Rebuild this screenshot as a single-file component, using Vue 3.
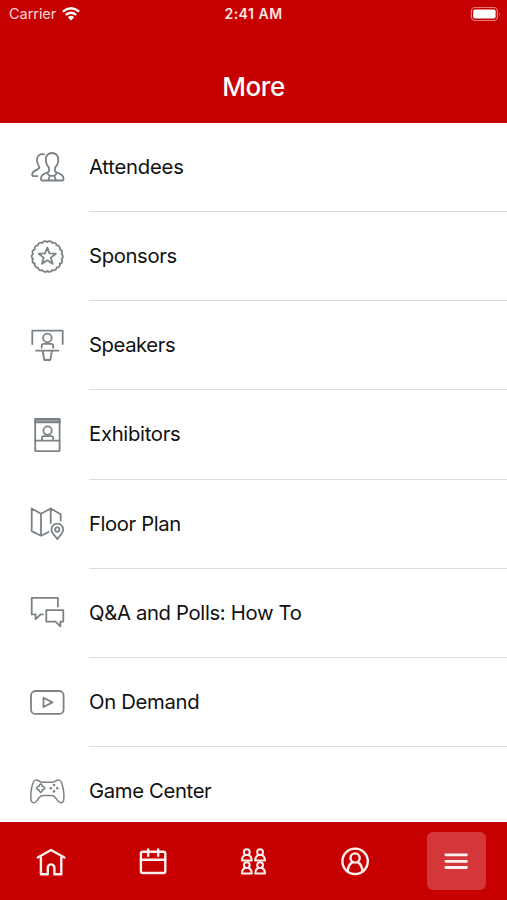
<script setup>
const items = [
  { id: 'attendees', label: 'Attendees', spacing: -0.24 },
  { id: 'sponsors', label: 'Sponsors', spacing: -0.38 },
  { id: 'speakers', label: 'Speakers', spacing: -0.44 },
  { id: 'exhibitors', label: 'Exhibitors', spacing: -0.3 },
  { id: 'floor', label: 'Floor Plan', spacing: -0.4 },
  { id: 'polls', label: 'Q&A and Polls: How To', spacing: -0.34 },
  { id: 'demand', label: 'On Demand', spacing: -0.32 },
  { id: 'games', label: 'Game Center', spacing: -0.36 },
]
const tabs = ['home', 'calendar', 'groups', 'profile', 'menu']

function point(r, angle) {
  return `${(20.3 + r * Math.sin(angle)).toFixed(2)} ${(19.5 - r * Math.cos(angle)).toFixed(2)}`
}

// Scalloped rim of the sponsor badge.
const bumps = 18
let badge = `M${point(14.4, 0)}`
for (let i = 1; i <= bumps; i++) badge += `A2.9 2.9 0 0 1 ${point(14.4, (i * 2 * Math.PI) / bumps)}`
badge += 'Z'

const star = Array.from({ length: 10 }, (_, i) => point(i % 2 ? 3.8 : 9, (i * Math.PI) / 5)).join(' ')
</script>

<template>
  <div class="screen">
    <header class="header">
      <div class="status">
        <div class="carrier">
          <span>Carrier</span>
          <svg class="wifi" viewBox="0 0 20 16">
            <path d="M1.8 5.6Q10 -1.2 18.2 5.6M4.8 8.9Q10 4.6 15.2 8.9" />
            <path class="solid" d="M6.8 11.2Q10 8.4 13.2 11.2L10 14.6Z" />
          </svg>
        </div>
        <div class="time">2:41 AM</div>
        <div class="power">
          <svg class="battery" viewBox="0 0 32 16">
            <rect class="shell" x="1.4" y="1.5" width="26" height="13" rx="3.6" />
            <rect class="charge" x="3.2" y="3.4" width="22.4" height="9.2" rx="1.8" />
            <path class="cap" d="M29 6.3Q30.8 8 29 9.7Z" />
          </svg>
        </div>
      </div>
      <h1 class="title">More</h1>
    </header>

    <main class="list">
      <div v-for="item in items" :key="item.id" class="row">
        <svg class="icon" viewBox="0 0 40 40">
          <g v-if="item.id === 'attendees'">
            <path d="M25 6C21 6 18.7 8.8 18.8 12.7C18.9 16.3 20.1 18.8 22 20.6V24.2C20.5 27 14 25.6 14 31.8Q13.8 33.5 15.5 33.5H35Q36.7 33.5 36.5 31.8C36.3 25.6 29.5 27 28 24.2V20.6C30 18.8 31.2 16.3 31.3 12.7C31.4 8.8 29 6 25 6Z" />
            <path d="M20.8 26.8L22.8 28.8H27.4L29.3 26.8M22.8 28.8L21.4 33M27.4 28.8L28.8 33" />
            <path d="M17 7.3C12.8 6.4 9.6 9 9.9 13.2C10 16 11 18.2 12.3 19.6C13.2 23.7 5.2 22.6 5.2 27.4Q5 29.2 7 29.2H10.3" />
          </g>
          <g v-else-if="item.id === 'sponsors'">
            <path :d="badge" />
            <polygon :points="star" />
          </g>
          <g v-else-if="item.id === 'speakers'">
            <path d="M5.3 18V4.7H35.7V18M9 24.6H31.4M15.7 25L17.3 34H23.3L24.9 25" />
            <circle cx="20.4" cy="11.9" r="4.3" />
            <path d="M14.7 21.8V19.6Q14.7 17.8 16.6 17.8H24.2Q26.1 17.8 26.1 19.6V21.8" />
          </g>
          <g v-else-if="item.id === 'exhibitors'">
            <rect class="band" x="8.2" y="3.9" width="24.4" height="3.5" />
            <rect x="8.2" y="3.9" width="24.4" height="32.2" rx=".7" />
            <path d="M8.2 25.7H32.6M15 25.5V23Q15 21.2 16.9 21.2H24.3Q26.2 21.2 26.2 23V25.5" />
            <circle cx="20.6" cy="15.6" r="4.2" />
          </g>
          <g v-else-if="item.id === 'floor'">
            <path d="M21.6 28L14 31.8L4.7 27.1V4.5L14 9.8L23.7 4.5L33.7 10.3V16.5M14 9.8V31.8M23.7 4.5V19" />
            <path d="M30.3 35.2C29 32.4 24.4 29.8 24.4 25.5A5.9 5.9 0 0 1 36.2 25.5C36.2 29.8 31.6 32.4 30.3 35.2Z" />
            <circle cx="30.3" cy="25.6" r="2.2" />
          </g>
          <g v-else-if="item.id === 'polls'">
            <path d="M15.8 21.4H13.7L8.6 26.1V21.4H4.7V4.9H30.9V13.6" />
            <path d="M19.3 17.1H36.3V28.6H33.4V33.3L28.5 28.6H19.3Z" />
          </g>
          <g v-else-if="item.id === 'demand'">
            <rect x="4" y="8" width="32.6" height="22.9" rx="4.5" />
            <path d="M16.5 14.7L25.5 19.4L16.5 24Z" />
          </g>
          <g v-else class="fine">
            <path d="M13.3 9.7C15.5 10.5 25.2 10.5 27.4 9.7C31.5 6.4 34 8 35 11.8C36.5 17 37.3 23.5 36.7 28.2C36.3 31.3 33.4 31.4 31.4 29.5C29.1 27.2 28.3 23.6 24.5 23.6H16.2C12.4 23.6 11.6 27.2 9.3 29.5C7.3 31.4 4.4 31.3 4 28.2C3.4 23.5 4.2 17 5.7 11.8C6.7 8 9.2 6.4 13.3 9.7Z" />
            <path d="M13.7 11.9L15.3 13.5V14.6H16.4L18 16.2L16.4 17.8H15.3V18.9L13.7 20.5L12.1 18.9V17.8H11L9.4 16.2L11 14.6H12.1V13.5Z" />
            <g class="dots">
              <circle cx="27" cy="13" r="1.3" /><circle cx="27" cy="19.4" r="1.3" />
              <circle cx="23.8" cy="16.2" r="1.3" /><circle cx="30.2" cy="16.2" r="1.3" />
            </g>
          </g>
        </svg>
        <div class="label" :style="{ letterSpacing: item.spacing + 'px' }">{{ item.label }}</div>
      </div>
    </main>

    <nav class="tabs">
      <div v-for="tab in tabs" :key="tab" class="tab">
        <div class="button" :class="{ active: tab === 'menu' }">
          <svg class="glyph" viewBox="0 0 30 30">
            <path v-if="tab === 'home'" d="M4.9 12V28.2H11.8V21.7A3.3 3.3 0 0 1 18.4 21.7V28.2H25.3V12M1.8 11.5L15 4L28.4 11.5" />
            <g v-else-if="tab === 'calendar'">
              <rect x="3.9" y="5.8" width="24.4" height="21.2" rx="1.8" />
              <path d="M4 13.7H28M11.2 3.5V9.7M21.2 3.5V9.7" />
            </g>
            <g v-else-if="tab === 'groups'" class="people">
              <template v-for="x in [8.8, 22.1]" :key="x">
                <g v-for="y in [6.2, 19.1]" :key="y" :transform="`translate(${x} ${y})`">
                  <circle r="2.9" />
                  <path d="M-2 2.9C-3.8 3.8-4.9 5-4.9 8.4H4.9C4.9 5 3.8 3.8 2 2.9" />
                </g>
              </template>
            </g>
            <g v-else-if="tab === 'profile'">
              <circle cx="15.1" cy="15.3" r="12.7" />
              <circle cx="15.1" cy="12" r="4.6" />
              <path d="M7.7 25.5C8 21 9.6 17.9 12.3 16.4M17.9 16.4C20.6 17.9 22.2 21 22.5 25.5" />
            </g>
            <path v-else class="bars" d="M4.9 8.8H25.5M4.9 15.3H25.5M4.9 21.5H25.5" />
          </svg>
        </div>
      </div>
    </nav>
  </div>
</template>

<style>
body { margin: 0; }
</style>

<style scoped>
.screen {
  display: flex;
  flex-direction: column;
  width: 507px;
  height: 900px;
  overflow: hidden;
  background: #fff;
  color: #111;
  font-family: Inter, "Liberation Sans", sans-serif;
}
svg { display: block; fill: none; stroke-linecap: round; stroke-linejoin: round; }
.header {
  flex: none;
  box-sizing: border-box;
  height: 123.4px;
  background: #c60000;
  color: #fff;
}
.status {
  display: grid;
  grid-template-columns: 1fr auto 1fr;
  align-items: center;
  height: 27px;
  padding: 0 6px 0 9px;
  font-size: 14.5px;
}
.carrier { display: flex; align-items: center; gap: 5px; color: #ffd6d6; letter-spacing: -.05px; }
.wifi { width: 20px; height: 16px; stroke: #fff; stroke-width: 2.4; stroke-linecap: butt; }
.solid { fill: #fff; stroke: none; }
.time { margin-left: -3px; font-size: 14px; font-weight: 600; letter-spacing: .5px; color: #ffe2e2; }
.power { display: flex; justify-content: flex-end; }
.battery { width: 32px; height: 16px; margin-right: -1px; }
.shell { stroke: #e27b7b; stroke-width: 1.2; }
.charge { fill: #fff; }
.cap { fill: #e27b7b; }
.title {
  margin: 0;
  padding-top: 44px;
  font-size: 26px;
  font-weight: 550;
  line-height: 32px;
  letter-spacing: -.4px;
  text-align: center;
}
.list { flex: 1; min-height: 0; overflow: hidden; }
.row { display: flex; height: 89.2px; padding-left: 27px; }
.row:first-child { height: 88.6px; }
.icon {
  flex: none;
  width: 40px;
  height: 40px;
  margin: 24.6px 22px 0 0;
  stroke: #7b8286;
  stroke-width: 1.8;
}
.row:first-child .icon { margin-top: 24px; }
.band { fill: #999ea2; }
.fine { stroke-width: 1.5; }
.dots { fill: #7b8286; stroke: none; }
.label {
  flex: 1;
  box-sizing: border-box;
  border-bottom: 1.5px solid #dedede;
  font-size: 20.3px;
  line-height: 88.6px;
  white-space: nowrap;
}
.tabs {
  flex: none;
  display: grid;
  grid-template-columns: repeat(5, 1fr);
  height: 78px;
  background: #c60000;
}
.tab { display: flex; justify-content: center; align-items: center; }
.button {
  display: flex;
  justify-content: center;
  align-items: center;
  width: 58.5px;
  height: 58.5px;
  border-radius: 6px;
}
.active { background: #d33739; }
.glyph { width: 30px; height: 30px; stroke: #fff0f0; stroke-width: 2.4; }
.people { stroke-width: 2; }
.bars { stroke-width: 2.8; }
</style>
